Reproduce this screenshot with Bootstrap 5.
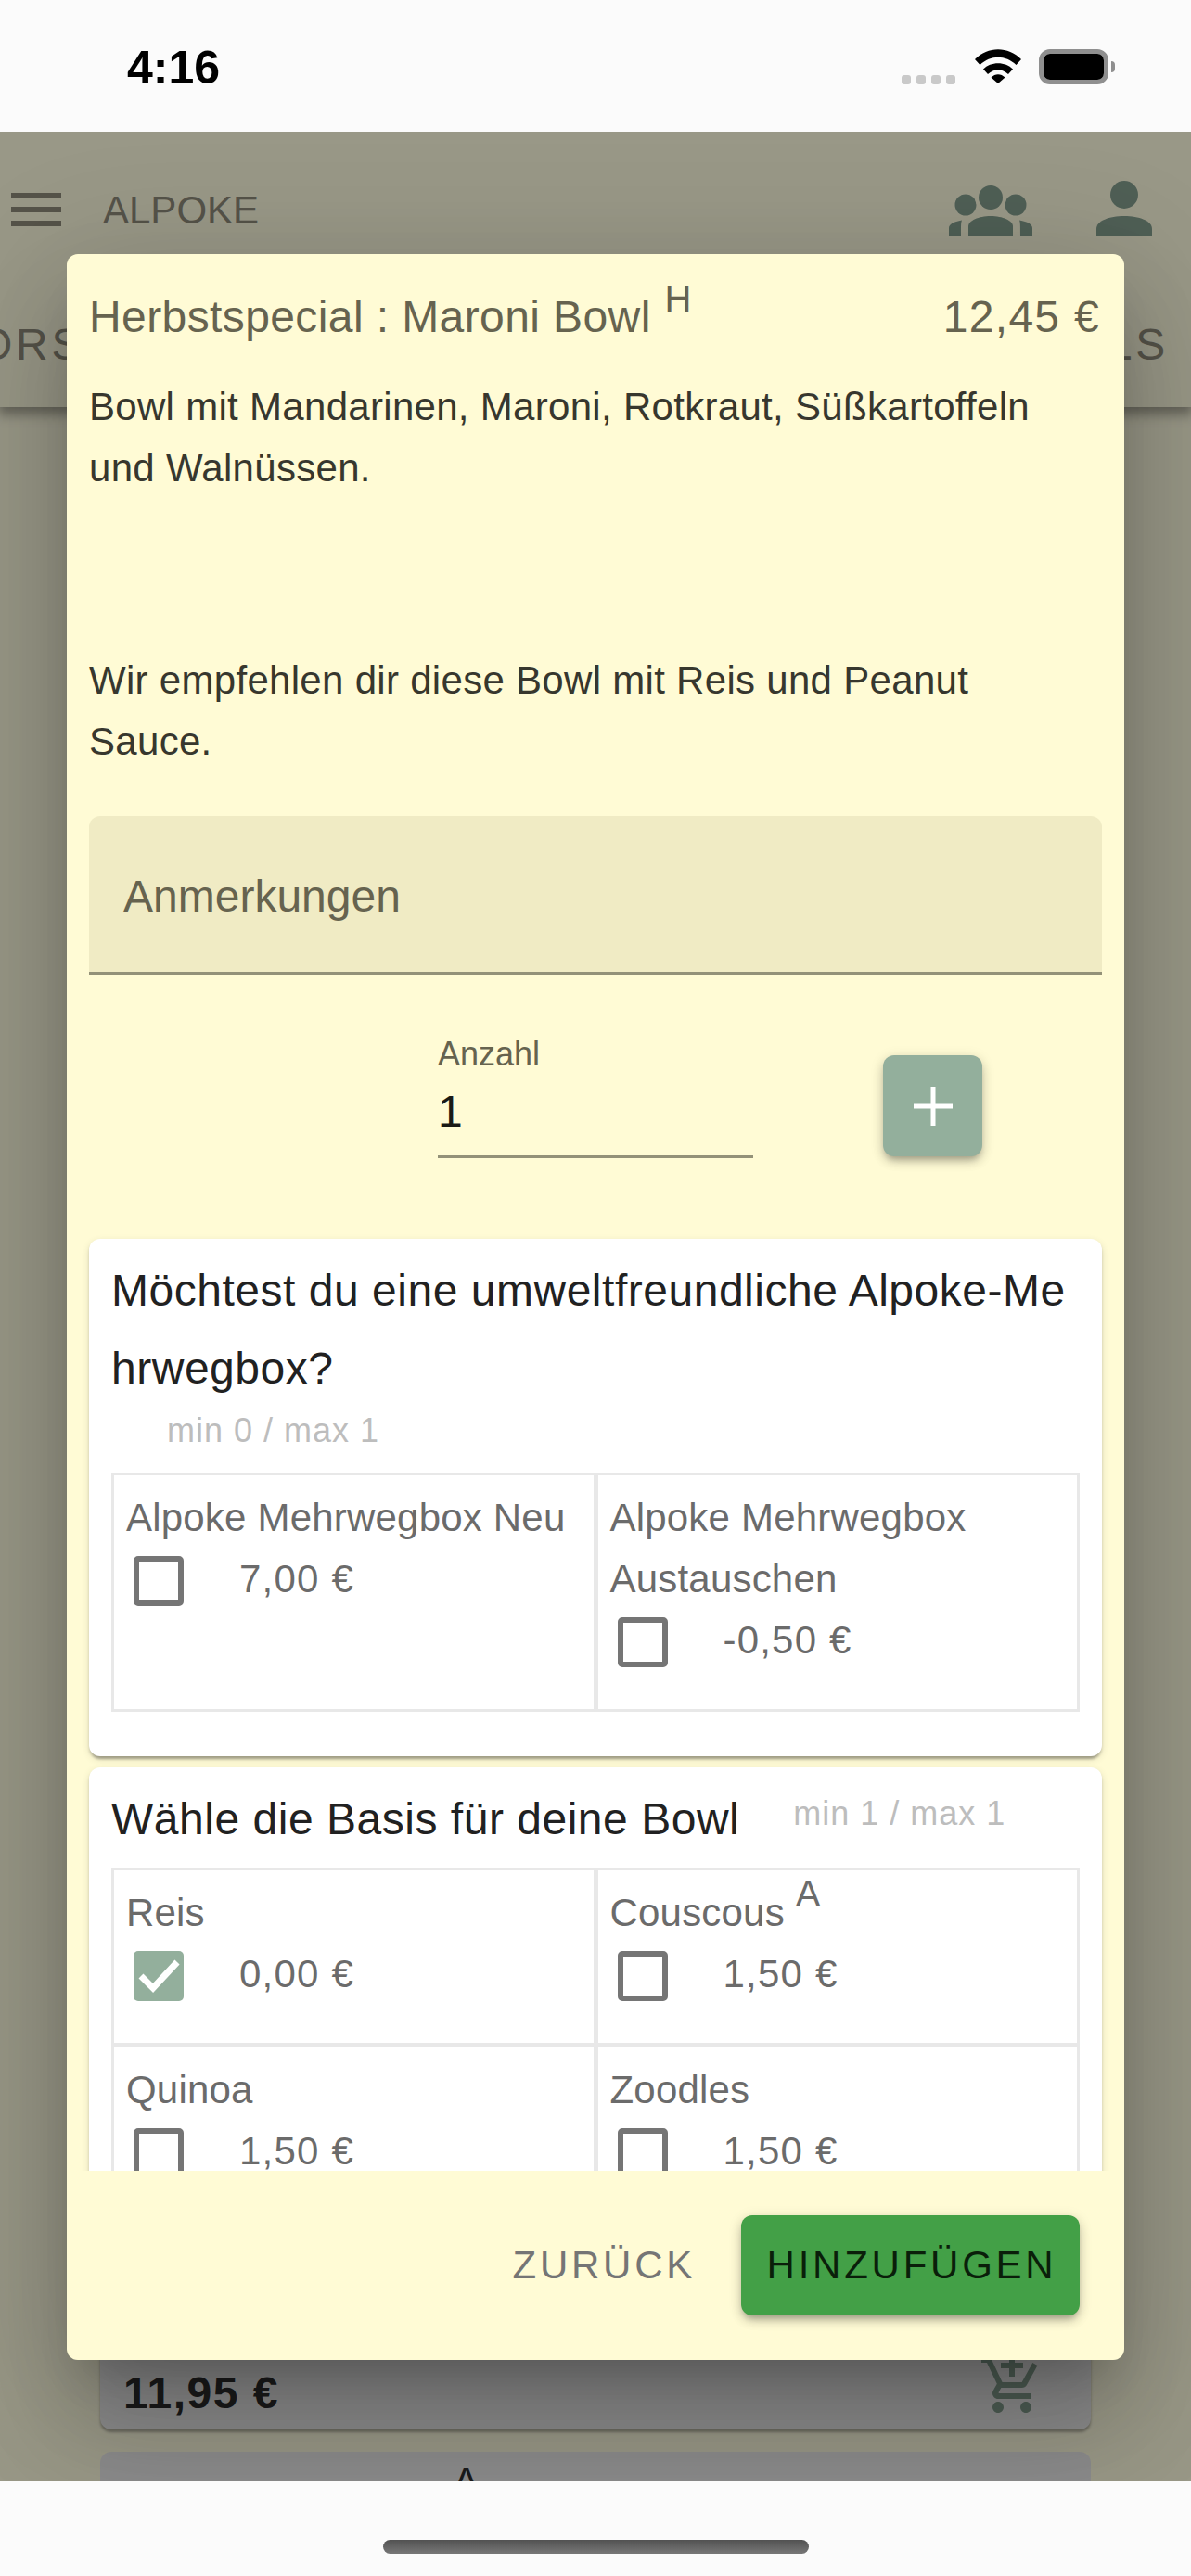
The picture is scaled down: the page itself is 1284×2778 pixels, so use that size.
<!DOCTYPE html>
<html lang="de">
<head>
<meta charset="utf-8">
<title>Alpoke</title>
<link href="https://cdn.jsdelivr.net/npm/bootstrap@5.3.0/dist/css/bootstrap.min.css" rel="stylesheet">
<style>
html,body{height:2778px;margin:0;overflow:hidden;background:#fbfbfb;font-family:"Liberation Sans",Arial,sans-serif}
.phone{height:2778px}
.status-top{height:142px;background:#fbfbfb;flex:none;position:relative}
.clock{position:absolute;left:137px;top:43px;font-size:50px;line-height:60px;font-weight:700;color:#000}
.sig{gap:6px;margin-top:28px;margin-right:21px}
.sig i{display:block;width:10px;height:10px;border-radius:3px;background:#c9c9c9}
.status-right{padding:53px 82px 0 0}
.wifi{width:50px;height:37px;margin-right:19px}
.batt{width:75px;height:38px;border:5px solid #8f8f8f;border-radius:12px;padding:0;background:#fbfbfb}
.batt b{display:block;width:100%;height:100%;background:#000;border-radius:7px}
.nub{width:4px;height:12px;background:#8f8f8f;border-radius:0 4px 4px 0;margin:13px 0 0 3px}
.appzone{height:2534px;background:#fffde2;overflow:hidden;flex:none}
.topbar{background:#fffde2;box-shadow:0 6px 12px 2px rgba(0,0,0,.35);position:relative;height:297px;color:#8e8a7b}
.toolrow{height:168px;padding:0 42px 0 12px}
.alpoke{font-size:42px;margin-left:45px;line-height:60px;padding-top:1px}
.tabsrow{height:129px;overflow:hidden;padding:0 24px 0 0;font-size:48px;letter-spacing:3.75px;line-height:124px}
.tabsrow span:first-child{margin-left:-24px}
.ic-group{width:90px;height:54px;margin-top:2px}
.ic-person{width:60px;height:60px;margin-left:69px;margin-top:-2px}
.under{padding:0 108px}
.undercard{background:#eaeaea;border-radius:12px;height:520px;margin-top:1661px;box-shadow:0 3px 3px rgba(0,0,0,.3);padding:0 49px 0 25px;color:#2e2e2e;font-weight:700;font-size:48px;line-height:66px;letter-spacing:1.5px}
.undercard .cartline{padding-bottom:6px}
.undercard svg{margin-bottom:6px}
.undercard2{background:#eaeaea;border-radius:12px;height:200px;margin-top:24px;color:#2e2e2e;font-size:40px;padding:8px 0 0 381px;line-height:46px}
.dim{position:absolute;inset:0;background:rgba(0,0,0,.4)}
.sheet{position:absolute;left:72px;top:132px;width:1140px;height:2271px;background:#fffbd5;border:0;border-radius:12px;display:flex;flex-direction:column;overflow:hidden;color:#66634f}
.shadowbox{position:absolute;left:72px;top:132px;width:1140px;height:2271px;border-radius:12px;box-shadow:0 33px 45px -21px rgba(0,0,0,.2),0 72px 114px 9px rgba(0,0,0,.14),0 27px 138px 24px rgba(0,0,0,.12)}
.sheetbody{height:2067px;overflow:hidden;padding:26px 24px 0;flex:none}
.sheettitle{font-size:48px;line-height:84px;letter-spacing:.4px;margin-bottom:22px}
.sheettitle sup{font-size:40px;top:-22px;letter-spacing:0;margin-left:1px}
.sheetprice{letter-spacing:1.3px;margin-right:2px}
.desc{font-size:42px;line-height:66px;letter-spacing:.3px;color:#37372e;margin:0}
.gapline{height:163px}
.notefield{margin-top:47px;height:171px;background:#f0ebc4;border-bottom:3px solid #939178;border-radius:12px 12px 0 0;padding:54px 0 0 37px;font-size:48px;line-height:66px;letter-spacing:0}
.qtyrow{margin:62px 0 87px 376px}
.qtybox{width:340px;height:136px;border-bottom:3px solid #939178}
.qtylabel{font-size:36px;line-height:48px;letter-spacing:0}
.qtyval{font-size:48px;line-height:66px;color:#1a1a15;margin-top:5px}
.plusbtn{width:107px;height:109px;background:#93af9c;border:0;border-radius:12px;margin:25px 0 0 140px;box-shadow:0 6px 6px -3px rgba(0,0,0,.2),0 6px 12px rgba(0,0,0,.14),0 3px 15px rgba(0,0,0,.12);padding:0}
.optcard{background:#fff;border:0;border-radius:12px;padding:14px 24px 48px;margin-bottom:12px;box-shadow:0 6px 3px -3px rgba(0,0,0,.2),0 3px 3px rgba(0,0,0,.14),0 3px 9px rgba(0,0,0,.12);color:#212121}
.opthead{margin-bottom:10px}
.opttitle{font-size:48px;line-height:84px;letter-spacing:.52px;word-break:break-all;min-width:0}
.minmax{font-size:36px;line-height:50px;letter-spacing:1px;color:#bdbdbd;margin:0 0 10px 60px}
.minmax.beside{margin-top:11px;margin-left:58px}
.opttable{width:100%;table-layout:fixed;border-collapse:collapse;margin:0}
.opttable td{border:3px solid #e8e8e8;padding:13px 13px 41px;vertical-align:top;font-size:42px;line-height:66px;letter-spacing:.2px;color:#6b6b6b;background:#fff}
.opttable td+td{border-left-width:5px}
.opttable tr+tr td{border-top-width:5px}
.opttable sup{font-size:40px;top:-21px}
.optprice{letter-spacing:1.2px}
.tick{width:54px;height:54px;border:6px solid #757575;border-radius:5px;margin:8px 60px 0 8px;flex:none;padding:0;display:block}
.tick.on{background:#93af9c;border:0}
.sheetfoot{height:204px;flex:none;padding:48px 48px 0 0;gap:49px}
.flatbtn{font-size:42px;letter-spacing:3.75px;line-height:108px;color:#757575;background:none;border:0;padding:0}
.raisedbtn{width:365px;height:108px;background:#43a047;border:0;border-radius:12px;font-size:42px;letter-spacing:3.75px;line-height:108px;padding:0 0 0 3px;color:#0a1f0a;box-shadow:0 6px 6px -3px rgba(0,0,0,.2),0 6px 12px rgba(0,0,0,.14),0 3px 15px rgba(0,0,0,.12)}
.status-bottom{height:102px;background:#fbfbfb;flex:none;padding-top:63px}
.homebar{width:459px;height:15px;border-radius:8px;background:linear-gradient(#525252,#777)}
</style>
</head>
<body>
<div class="phone d-flex flex-column">
  <div class="status-top">
    <div class="clock">4:16</div>
    <div class="status-right d-flex justify-content-end align-items-start">
      <div class="sig d-flex"><i></i><i></i><i></i><i></i></div>
      <svg class="wifi" viewBox="0 0 50 37"><path d="M0 11C14-3.5 36-3.5 50 11L44.5 17C33 6 17 6 5.5 17Z"/><path d="M9 21.5C17 13 33 13 41 21.5L36 27C29 20.5 21 20.5 14 27Z"/><path d="M17.5 30.5C22 26 28 26 32.5 30.5L25 37Z"/></svg>
      <div class="batt"><b></b></div>
      <div class="nub"></div>
    </div>
  </div>
  <div class="appzone position-relative">
    <header class="topbar">
      <div class="toolrow d-flex align-items-center">
        <svg width="54" height="36" viewBox="0 0 54 36" fill="#8e8a7b"><rect width="54" height="6" y="0"/><rect width="54" height="6" y="15"/><rect width="54" height="6" y="30"/></svg>
        <div class="alpoke">ALPOKE</div>
        <svg class="ic-group ms-auto" viewBox="0 0 90 54" fill="#849e8e"><defs><mask id="gm"><rect width="90" height="54" fill="#fff"/><circle cx="45" cy="13" r="17" fill="#000"/></mask></defs><circle cx="45" cy="13" r="13"/><g mask="url(#gm)"><circle cx="18" cy="21" r="11.5"/><circle cx="72" cy="21" r="11.5"/></g><path d="M21 54V44C21 38 32 33 45 33S69 38 69 44V54Z"/><path d="M0 54V46C0 42 5 39 14 37.5C13 40 13 42 13 54Z"/><path d="M90 54V46C90 42 85 39 76 37.5C77 40 77 42 77 54Z"/></svg>
        <svg class="ic-person" viewBox="0 0 60 60" fill="#849e8e"><circle cx="30" cy="15" r="15"/><path d="M0 60V52C0 43 14 38 30 38S60 43 60 52V60Z"/></svg>
      </div>
      <nav class="tabsrow d-flex justify-content-between"><span>ORS</span><span>LS</span></nav>
    </header>
    <main class="under">
      <div class="undercard d-flex flex-column justify-content-end">
        <div class="cartline d-flex justify-content-between align-items-end">
          <span>11,95 €</span>
          <svg width="72" height="72" viewBox="0 0 24 24" fill="#849e8e"><path d="M11 9h2V6h3V4h-3V1h-2v3H8v2h3v3zm-4 9c-1.1 0-1.99.9-1.99 2S5.9 22 7 22s2-.9 2-2-.9-2-2-2zm10 0c-1.1 0-1.99.9-1.99 2s.89 2 1.99 2 2-.9 2-2-.9-2-2-2zm-9.83-3.25l.03-.12.9-1.63h7.45c.75 0 1.41-.41 1.75-1.03l3.86-7.01L19.42 4h-.01l-1.1 2-2.76 5H8.53l-.13-.27L6.16 6l-.95-2-.94-2H1v2h2l3.6 7.59-1.35 2.45c-.16.28-.25.61-.25.96 0 1.1.9 2 2 2h12v-2H7.42c-.13 0-.25-.11-.25-.25z"/></svg>
        </div>
      </div>
      <div class="undercard2">A</div>
    </main>
    <div class="dim"></div>
    <div class="shadowbox"></div>
    <div class="modal-content sheet">
      <div class="sheetbody">
        <div class="sheettitle d-flex justify-content-between">
          <span>Herbstspecial : Maroni Bowl <sup>H</sup></span>
          <span class="sheetprice">12,45 €</span>
        </div>
        <p class="desc">Bowl mit Mandarinen, Maroni, Rotkraut, Süßkartoffeln<br>und Walnüssen.</p>
        <div class="gapline"></div>
        <p class="desc">Wir empfehlen dir diese Bowl mit Reis und Peanut<br>Sauce.</p>
        <div class="notefield">Anmerkungen</div>
        <div class="qtyrow d-flex align-items-start">
          <div class="qtybox">
            <div class="qtylabel">Anzahl</div>
            <div class="qtyval">1</div>
          </div>
          <button class="btn plusbtn d-flex align-items-center justify-content-center" type="button" aria-label="Anzahl erhöhen">
            <svg width="42" height="42" viewBox="0 0 42 42" fill="#fff"><rect x="18.5" width="5" height="42"/><rect y="18.5" width="42" height="5"/></svg>
          </button>
        </div>
        <section class="card optcard">
          <div class="opthead d-flex flex-wrap">
            <div class="opttitle">Möchtest du eine umweltfreundliche Alpoke-Mehrwegbox?</div>
            <div class="minmax">min 0 / max 1</div>
          </div>
          <table class="opttable">
            <tr>
              <td>Alpoke Mehrwegbox Neu
                <div class="d-flex"><span class="tick"></span><span class="optprice">7,00 €</span></div></td>
              <td>Alpoke Mehrwegbox Austauschen
                <div class="d-flex"><span class="tick"></span><span class="optprice">-0,50 €</span></div></td>
            </tr>
          </table>
        </section>
        <section class="card optcard">
          <div class="opthead d-flex flex-wrap">
            <div class="opttitle">Wähle die Basis für deine Bowl</div>
            <div class="minmax beside">min 1 / max 1</div>
          </div>
          <table class="opttable">
            <tr>
              <td>Reis
                <div class="d-flex"><span class="tick on"><svg class="d-block" width="54" height="54" viewBox="0 0 54 54" fill="none" stroke="#fff" stroke-width="7"><path d="M8 27l13 13 26-28"/></svg></span><span class="optprice">0,00 €</span></div></td>
              <td>Couscous <sup>A</sup>
                <div class="d-flex"><span class="tick"></span><span class="optprice">1,50 €</span></div></td>
            </tr>
            <tr>
              <td>Quinoa
                <div class="d-flex"><span class="tick"></span><span class="optprice">1,50 €</span></div></td>
              <td>Zoodles
                <div class="d-flex"><span class="tick"></span><span class="optprice">1,50 €</span></div></td>
            </tr>
          </table>
        </section>
      </div>
      <div class="sheetfoot d-flex justify-content-end align-items-start">
        <button class="flatbtn" type="button">ZURÜCK</button>
        <button class="raisedbtn" type="button">HINZUFÜGEN</button>
      </div>
    </div>
  </div>
  <div class="status-bottom d-flex justify-content-center">
    <div class="homebar"></div>
  </div>
</div>
<script src="https://cdn.jsdelivr.net/npm/bootstrap@5.3.0/dist/js/bootstrap.bundle.min.js"></script>
</body>
</html>
